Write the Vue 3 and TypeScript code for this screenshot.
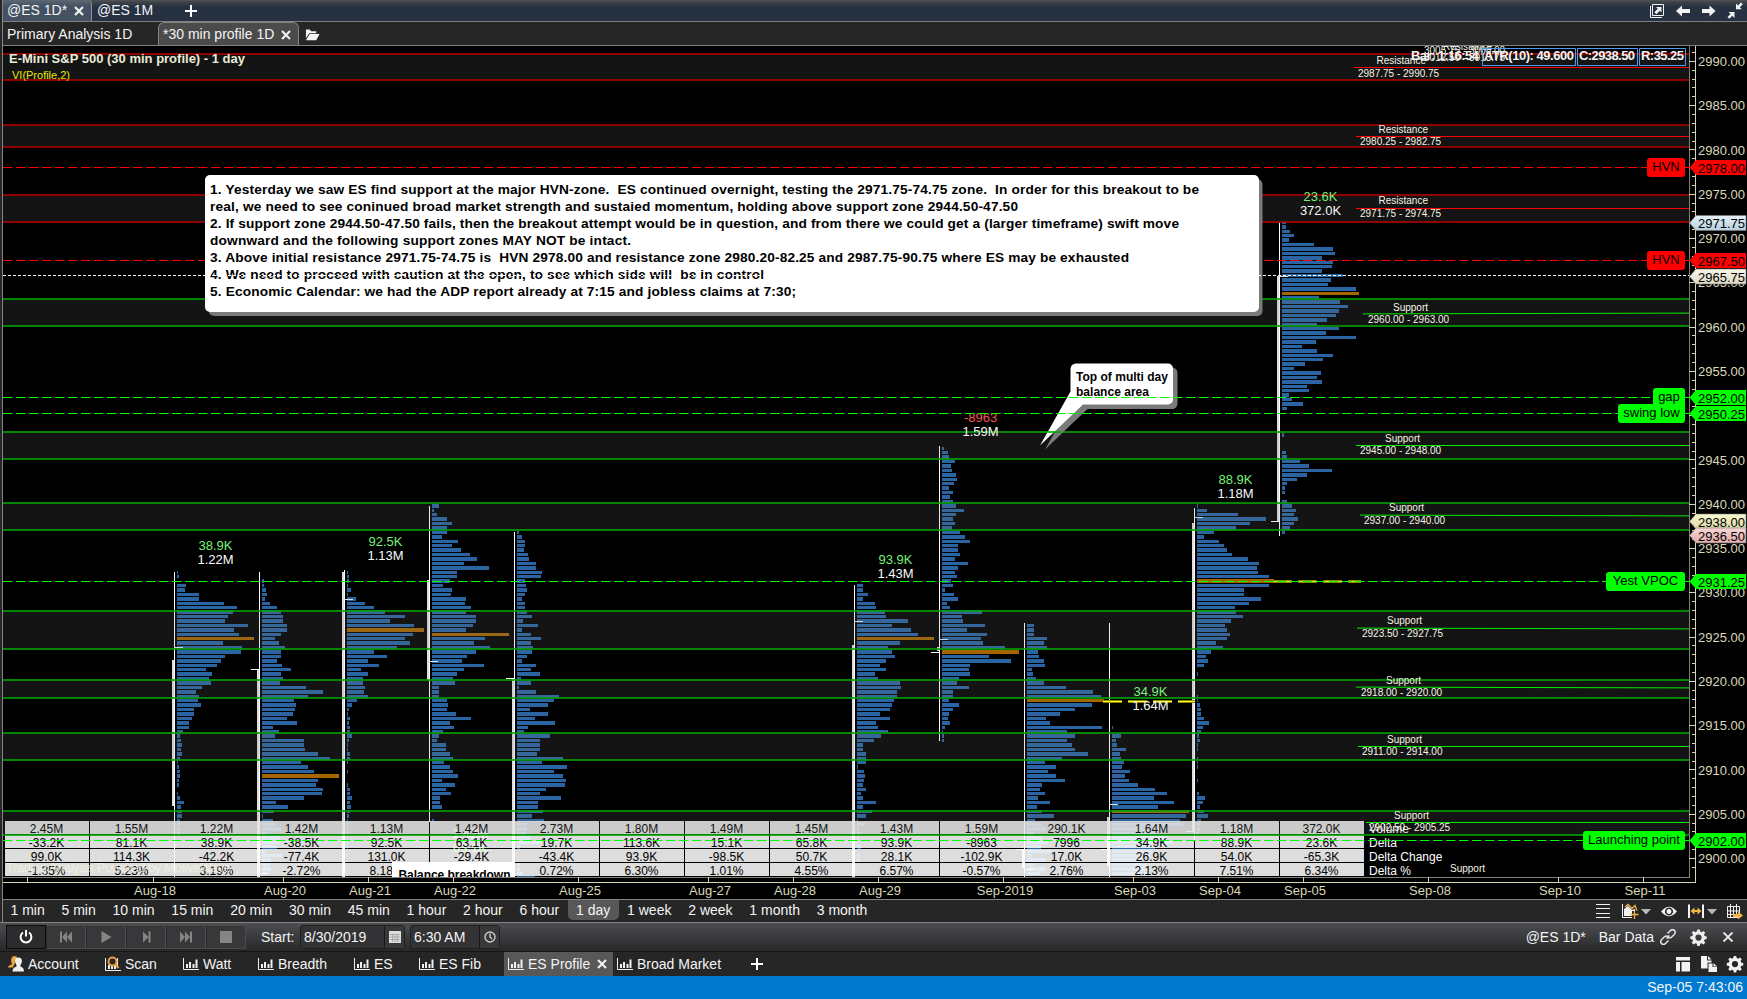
<script setup lang="ts">
interface Profile { x: number; start: number; poc: number; rows: number[] }
interface Bar { x: number; y: number; w: number; h: number; poc: boolean }

const ROW = 4.4286
const ORIGIN = 220.76
const rowTop = (i: number): number => Math.round(ORIGIN + ROW * i)

const profiles: Profile[] = [
  { x: 177, start: 79, poc: 15, rows: [1,2,0,9,8,22,22,47,60,56,51,48,71,57,62,77,46,65,64,48,44,40,29,35,32,34,25,19,22,21,24,17,17,15,12,12,6,3,4,5,4,5,3,1,2,3,3,2,2,0,1,3,7,4,5,5,3,3,3,3] },
  { x: 262, start: 81, poc: 44, rows: [2,2,4,5,3,8,15,19,21,21,25,25,19,13,17,23,19,19,15,20,29,19,21,18,44,61,46,32,34,33,31,25,35,11,17,13,42,42,43,56,68,39,46,52,77,56,54,61,60,42,14,26,12,1,11,13,19,5,18,18,15,3,20,9,8,9,5] },
  { x: 347, start: 79, poc: 13, rows: [1,2,2,1,4,1,9,18,27,38,58,43,67,77,66,58,63,50,27,40,21,32,14,21,16,16,18,17,21,10,5,2,1,3,2,3,3,5,2,1,1,3,3,1,0,1,0,0,1,3,3,5,3,4,3,2,1,2,1,1,0,1,1,0,1] },
  { x: 432, start: 64, poc: 29, rows: [7,2,5,15,20,15,15,10,26,20,29,38,45,32,57,25,25,18,11,20,19,34,33,39,34,44,44,41,34,77,53,42,58,44,35,30,52,32,25,21,23,7,7,7,15,16,15,24,39,18,22,11,7,5,14,14,18,21,12,18,21,26,10,23,14,19,8,8,10,0,0,2] },
  { x: 517, start: 70, poc: -1, rows: [2,5,8,8,7,11,12,19,19,25,24,8,9,10,8,5,8,8,10,15,6,21,5,14,24,14,16,15,10,5,19,14,23,4,14,2,19,42,37,31,13,31,18,38,11,7,33,23,23,23,20,46,25,50,37,46,49,48,29,23,44,21,21,26,15,27,10,10,9,13,24,3,0,0,0,3,3,6,18] },
  { x: 857, start: 82, poc: 12, rows: [6,6,11,6,18,19,28,29,51,35,54,61,77,43,31,35,38,29,23,29,18,21,43,44,40,40,37,35,33,23,33,19,21,31,24,17,6,6,9,9,9,1,7,8,7,6,9,4,6,19,6,15,9,1,8,2,4,2,1,4,0,3,3] },
  { x: 942, start: 51, poc: 46, rows: [2,6,7,13,9,10,14,15,12,7,11,8,11,14,22,14,11,13,10,18,23,28,16,16,18,13,26,16,13,15,9,11,3,12,16,5,8,40,20,21,43,25,45,39,41,63,77,47,69,28,27,28,17,15,27,11,11,7,17,11,7,6,8,3,1,2,2] },
  { x: 1027, start: 91, poc: 17, rows: [7,7,7,20,17,20,11,12,17,18,5,6,9,17,39,66,74,77,65,48,33,19,23,75,40,48,40,45,48,61,35,18,29,21,29,38,15,13,18,11,23,10,15,27,8,15,19,7,15,21,14,24,5,19,7,19,13] },
  { x: 1112, start: 114, poc: 19, rows: [1,0,9,4,5,14,8,9,12,10,18,13,17,26,43,55,42,62,46,77,74,68,71,50,45,55,60,43,40,39,30,35,36,38] },
  { x: 1197, start: 64, poc: 17, rows: [1,10,41,69,53,39,17,7,22,27,30,35,51,62,60,61,72,77,72,47,47,64,52,38,39,46,34,28,30,33,30,19,26,14,9,11,7,0,1,0,0,0,0,1,1,3,4,4,7,12,6,4,2,3,1,1,0,1,1,1,0,0,1,0,0,2,8,6,3,7,11,4,3,3,2] },
  { x: 1282, start: 0, poc: 16, rows: [4,4,8,12,7,32,51,53,40,51,50,40,61,49,46,74,77,37,58,66,57,54,45,35,57,44,74,34,20,35,51,41,23,12,39,35,40,25,27,7,10,21,5,0,0,0,0,0,2,0,0,0,4,5,18,27,50,25,15,5,3,3,0,5,10,14,12,16,12,8,3] },
]

const bars: Bar[] = profiles.flatMap((p) =>
  p.rows
    .map((w, k) => {
      const i = p.start + k
      const y = rowTop(i)
      return { x: p.x, y, w, h: rowTop(i + 1) - y - 1, poc: k === p.poc }
    })
    .filter((b) => b.w > 0),
)

// x is the wick position; body sits directly left of it
const candles = [
  { x: 174, top: 572, bottom: 877, body: [660, 806], left: 0, right: 647 },
  { x: 259, top: 572, bottom: 877, body: [669, 877], left: 669, right: 873 },
  { x: 344, top: 570, bottom: 877, body: [572, 877], left: 0, right: 599 },
  { x: 429, top: 506, bottom: 822, body: [580, 680], left: 0, right: 661 },
  { x: 514, top: 532, bottom: 877, body: [678, 877], left: 678, right: 0 },
  { x: 854, top: 585, bottom: 877, body: [645, 877], left: 0, right: 621 },
  { x: 939, top: 446, bottom: 741, body: [647, 651], left: 652, right: 639 },
  { x: 1024, top: 623, bottom: 877, body: [850, 868], left: 849, right: 869 },
  { x: 1109, top: 623, bottom: 877, body: [817, 866], left: 849, right: 804 },
  { x: 1194, top: 508, bottom: 840, body: [523, 832], left: 831, right: 517 },
  { x: 1279, top: 223, bottom: 536, body: [276, 521], left: 521, right: 276 },
]

const volumes = [
  { x: 215.5, y: 550, delta: '38.9K', total: '1.22M' },
  { x: 385.5, y: 546, delta: '92.5K', total: '1.13M' },
  { x: 895.5, y: 564, delta: '93.9K', total: '1.43M' },
  { x: 980.5, y: 422, delta: '-8963', total: '1.59M' },
  { x: 1235.5, y: 484, delta: '88.9K', total: '1.18M' },
  { x: 1150.5, y: 696, delta: '34.9K', total: '1.64M' },
  { x: 1320.5, y: 201, delta: '23.6K', total: '372.0K' },
]

const tableRows: string[][] = [
  ['2.45M','1.55M','1.22M','1.42M','1.13M','1.42M','2.73M','1.80M','1.49M','1.45M','1.43M','1.59M','290.1K','1.64M','1.18M','372.0K'],
  ['-33.2K','81.1K','38.9K','-38.5K','92.5K','63.1K','19.7K','113.6K','15.1K','65.8K','93.9K','-8963','7996','34.9K','88.9K','23.6K'],
  ['99.0K','114.3K','-42.2K','-77.4K','131.0K','-29.4K','-43.4K','93.9K','-98.5K','50.7K','28.1K','-102.9K','17.0K','26.9K','54.0K','-65.3K'],
  ['-1.35%','5.23%','3.19%','-2.72%','8.18%','','0.72%','6.30%','1.01%','4.55%','6.57%','-0.57%','2.76%','2.13%','7.51%','6.34%'],
]
const tableLabels = ['Volume', 'Delta', 'Delta Change', 'Delta %']

const zones = [
  { kind: 'res', top: 54, bottom: 80, mid: 67.5, slope: 0, x: 1354, label: 'Resistance', lx: 1376.5, ly: 64, range: '2987.75 - 2990.75', rx: 1358, ry: 77 },
  { kind: 'res', top: 125, bottom: 147, mid: 136.5, slope: 0, x: 1356, label: 'Resistance', lx: 1378.5, ly: 133, range: '2980.25 - 2982.75', rx: 1360, ry: 145 },
  { kind: 'res', top: 195, bottom: 222, mid: 208.5, slope: 0, x: 1356, label: 'Resistance', lx: 1378.5, ly: 204, range: '2971.75 - 2974.75', rx: 1360, ry: 217 },
  { kind: 'sup', top: 299, bottom: 326, mid: 313.5, slope: -1, x: 1363, label: 'Support', lx: 1393, ly: 311, range: '2960.00 - 2963.00', rx: 1368, ry: 323 },
  { kind: 'sup', top: 432, bottom: 459, mid: 445.5, slope: 0, x: 1356, label: 'Support', lx: 1385, ly: 442, range: '2945.00 - 2948.00', rx: 1360, ry: 454 },
  { kind: 'sup', top: 503, bottom: 530, mid: 515.5, slope: 1, x: 1360, label: 'Support', lx: 1389, ly: 511, range: '2937.00 - 2940.00', rx: 1364, ry: 524 },
  { kind: 'sup', top: 611, bottom: 649, mid: 628.5, slope: 1, x: 1357, label: 'Support', lx: 1387, ly: 624, range: '2923.50 - 2927.75', rx: 1362, ry: 637 },
  { kind: 'sup', top: 680, bottom: 698, mid: 687.5, slope: 1, x: 1356, label: 'Support', lx: 1386, ly: 684, range: '2918.00 - 2920.00', rx: 1361, ry: 696 },
  { kind: 'sup', top: 733, bottom: 760, mid: 746.5, slope: 0, x: 1358, label: 'Support', lx: 1387, ly: 743, range: '2911.00 - 2914.00', rx: 1362, ry: 755 },
  { kind: 'sup', top: 811, bottom: 835, mid: 822.5, slope: 0, x: 1366, label: 'Support', lx: 1394, ly: 819, range: '2902.50 - 2905.25', rx: 1369, ry: 831 },
]

const levels = [
  { y: 167.5, kind: 'red', label: 'HVN', x: 1647, w: 38, price: '2978.00' },
  { y: 260.5, kind: 'red', label: 'HVN', x: 1647, w: 38, price: '2967.50' },
  { y: 397.5, kind: 'green', label: 'gap', x: 1653, w: 32, price: '2952.00' },
  { y: 413.5, kind: 'green', label: 'swing low', x: 1618, w: 67, price: '2950.25' },
  { y: 581.5, kind: 'green', label: 'Yest VPOC', x: 1606, w: 79, price: '2931.25' },
  { y: 840.5, kind: 'green', label: 'Launching point', x: 1583, w: 102, price: '2902.00' },
]
const flags = [
  { y: 223, fill: 'url(#flagBlue)', price: '2971.75' },
  { y: 276.5, fill: 'url(#flagCream)', price: '2965.75' },
  { y: 521.5, fill: 'url(#flagYellow)', price: '2938.00' },
  { y: 535.5, fill: 'url(#flagPink)', price: '2936.50' },
]
const flagPoints = (y: number): string =>
  `1689.5,${y} 1696,${y - 7.5} 1746,${y - 7.5} 1746,${y + 7.5} 1696,${y + 7.5}`

const priceY = (p: number): number => 61.3 + (2990 - p) * 8.857
const majorPrices = Array.from({ length: 19 }, (_, i) => 2990 - i * 5)
const minorPrices = Array.from({ length: 93 }, (_, i) => 2991 - i).filter((p) => p % 5 !== 0)

const dates: [number, string][] = [
  [28, ''], [154, 'Aug-18'], [284, 'Aug-20'], [369, 'Aug-21'], [454, 'Aug-22'], [579, 'Aug-25'], [709, 'Aug-27'], [794, 'Aug-28'],
  [879, 'Aug-29'], [1004, 'Sep-2019'], [1134, 'Sep-03'], [1219, 'Sep-04'], [1304, 'Sep-05'], [1429, 'Sep-08'], [1559, 'Sep-10'], [1644, 'Sep-11'],
]

const notes: [string, number][] = [
  ['1. Yesterday we saw ES find support at the major HVN-zone.  ES continued overnight, testing the 2971.75-74.75 zone.  In order for this breakout to be', 989],
  ['real, we need to see coninued broad market strength and sustaied momentum, holding above support zone 2944.50-47.50', 808],
  ['2. If support zone 2944.50-47.50 fails, then the breakout attempt would be in question, and from there we could get a (larger timeframe) swift move', 969],
  ['downward and the following support zones MAY NOT be intact.', 421],
  ['3. Above initial resistance 2971.75-74.75 is  HVN 2978.00 and resistance zone 2980.20-82.25 and 2987.75-90.75 where ES may be exhausted', 919],
  ['4. We need to proceed with caution at the open, to see which side will  be in control', 554],
  ['5. Economic Calendar: we had the ADP report already at 7:15 and jobless claims at 7:30;', 586],
]

const timeframes = ['1 min', '5 min', '10 min', '15 min', '20 min', '30 min', '45 min', '1 hour', '2 hour', '6 hour', '1 day', '1 week', '2 week', '1 month', '3 month']

const pages = [
  { name: 'Account', icon: 'account', w: 97 },
  { name: 'Scan', icon: 'scan', w: 78 },
  { name: 'Watt', icon: 'chart', w: 75 },
  { name: 'Breadth', icon: 'chart', w: 96 },
  { name: 'ES', icon: 'chart', w: 65 },
  { name: 'ES Fib', icon: 'chart', w: 89 },
  { name: 'ES Profile', icon: 'chart', w: 109 },
  { name: 'Broad Market', icon: 'chart', w: 136 },
]
const gear = 'M6.8 0h2.4l.5 2.1 1.4.6 1.9-1.2 1.7 1.7-1.2 1.9.6 1.4 2.1.5v2.4l-2.1.5-.6 1.4 1.2 1.9-1.7 1.7-1.9-1.2-1.4.6-.5 2.1H6.8l-.5-2.1-1.4-.6-1.9 1.2-1.7-1.7 1.2-1.9-.6-1.4L-.2 9.400V7l2.100-.5.6-1.400L1.300 3.200 3 1.500l1.900 1.200 1.400-.6zM8 5a3.100 3.100 0 1 0 0 6.200A3.100 3.100 0 1 0 8 5z'
</script>

<template>
  <div class="app">
    <div class="frame">
      <header class="topbar">
        <div class="top-tab active">@ES 1D*
          <svg class="close" viewBox="0 0 10 10"><path d="M1 1l8 8M9 1l-8 8" /></svg>
        </div>
        <div class="top-tab">@ES 1M</div>
        <svg class="plus" viewBox="0 0 12 12"><path d="M6 0v12M0 6h12" /></svg>
        <div class="spacer"></div>
        <svg class="top-icons" width="100" height="20" viewBox="1647 0 100 20">
          <path class="line" d="M1652.500 3.500h11v11h-11zM1650.500 5v11.500H1662" />
          <path class="solid" d="M1656 6h5.500v5.500l-1.700-1.700-3.500 3.500-2-2 3.500-3.500z" />
          <path class="solid" d="M1676 10l6-5.500v3.500h8v4h-8v3.500z" />
          <path class="solid" d="M1715.500 10l-6-5.500v3.500h-7.500v4h7.500v3.500z" />
          <path class="solid" d="M1736 2.500l2 2 3-3 1.800 1.800-3 3 2 2h-5.800zM1734.500 17v-6h-6l2 2-3 3 1.800 1.800 3-3z" />
        </svg>
      </header>
      <div class="subbar">
        <div class="sub-tab">Primary Analysis 1D</div>
        <div class="sub-tab active">*30 min profile 1D
          <svg class="close" viewBox="0 0 10 10"><path d="M1 1l8 8M9 1l-8 8" /></svg>
        </div>
        <svg class="folder" viewBox="0 0 16 12"><path d="M1 0h4l1.500 2H12v2H4.500L1 9.500zM5 5h10.500L12 11.500H1z" /></svg>
      </div>

      <svg class="chart" width="1744" height="853" viewBox="3 46 1744 853">
        <defs>
          <linearGradient id="flagBlue" x1="0" y1="0" x2="0" y2="1"><stop offset="0" stop-color="#e6f2fa" /><stop offset="1" stop-color="#b4cfdf" /></linearGradient>
          <linearGradient id="flagCream" x1="0" y1="0" x2="0" y2="1"><stop offset="0" stop-color="#faf7ea" /><stop offset="1" stop-color="#dcd8c6" /></linearGradient>
          <linearGradient id="flagYellow" x1="0" y1="0" x2="0" y2="1"><stop offset="0" stop-color="#fbfad0" /><stop offset="1" stop-color="#dad8a4" /></linearGradient>
          <linearGradient id="flagPink" x1="0" y1="0" x2="0" y2="1"><stop offset="0" stop-color="#fbd6d6" /><stop offset="1" stop-color="#dfaaaa" /></linearGradient>
          <clipPath id="plot"><rect x="3" y="46" width="1686" height="831" /></clipPath>
        </defs>

        <g clip-path="url(#plot)">
          <g shape-rendering="crispEdges">
            <rect v-for="(b, i) in bars" :key="i" :class="b.poc ? 'poc' : 'bar'" :x="b.x" :y="b.y" :width="b.w" :height="b.h" />
            <g v-for="c in candles" :key="c.x" class="candle">
              <rect :x="c.x" :y="c.top" width="1" :height="c.bottom - c.top" />
              <rect class="body" :x="c.x - 2" :y="c.body[0]" width="2" :height="c.body[1] - c.body[0]" />
              <rect v-if="c.left" :x="c.x - 8" :y="c.left" width="9" height="1" />
              <rect v-if="c.right" class="tick" :x="c.x" :y="c.right" width="9" height="1" />
            </g>
            <path class="vpoc-glow" d="M1103 701.500h92M1273 581.500h88" stroke-dasharray="18.500 6.500" />
            <path class="vpoc" d="M1103 701.500h92M1273 581.500h88" stroke-dasharray="18.500 6.500" />
          </g>

          <g class="volumes">
            <text x="470" y="838">1.42M</text>
            <text class="pos" x="470" y="852">63.1K</text>
          </g>

          <g v-for="(row, r) in tableRows" :key="r">
            <g v-for="(cell, c) in row" :key="c">
              <rect class="cell" :x="5 + c * 85" :y="821 + r * 14" width="84" height="13" shape-rendering="crispEdges" />
              <text class="cell-text" :x="46.500 + c * 85" :y="833 + r * 14">{{ cell }}</text>
            </g>
            <text class="row-label" x="1369" :y="833 + r * 14">{{ tableLabels[r] }}</text>
          </g>
          <text class="watermark" x="6" y="872" textLength="225">Trading Analysis Powered by MotiveWave</text>
          <rect class="note" x="392" y="862" width="123" height="40" />
          <text class="note-text" x="398.500" y="879" textLength="112">Balance breakdown</text>

          <g v-for="z in zones" :key="z.range">
            <rect class="zone" x="3" :y="z.top" width="1686" :height="z.bottom - z.top" shape-rendering="crispEdges" />
            <path :class="['edge', z.kind]" :d="`M3 ${z.top}H1689M3 ${z.bottom}H1689`" />
            <path :class="['mid', z.kind]" :d="`M${z.x} ${z.mid - z.slope * 0.4}L1689 ${z.mid + z.slope * 0.4}`" />
            <text class="zone-text" :x="z.lx" :y="z.ly">{{ z.label }}</text>
            <text class="zone-text" :x="z.rx" :y="z.ry">{{ z.range }}</text>
          </g>
          <text class="zone-text" x="1450" y="872">Support</text>
          <text class="zone-text" x="1443" y="50">Resistance</text>
          <text class="zone-text" x="1424" y="54">3005.75 - 3008.00</text>
          <text class="zone-text" x="1424" y="61">3012.50 - 3013.75</text>

          <text class="title" x="9" y="63" textLength="236">E-Mini S&amp;P 500 (30 min profile) - 1 day</text>
          <text class="study" x="12" y="79" textLength="58">VI(Profile,2)</text>
          <g class="volumes">
            <g v-for="v in volumes" :key="v.x">
              <text :class="v.delta.startsWith('-') ? 'neg' : 'pos'" :x="v.x" :y="v.y">{{ v.delta }}</text>
              <text :x="v.x" :y="v.y + 14">{{ v.total }}</text>
            </g>
          </g>

          <path class="level red" d="M3 167.500H1647M3 260.500H1647" />
          <path class="note-shadow" d="M214 179h1043a5.500 5.500 0 0 1 5.500 5.500V311a5 5 0 0 1-5 5H214q-3 0-5-3z" />
          <rect class="note" x="205" y="175" width="1054" height="137" rx="5" />
          <text v-for="(n, i) in notes" :key="i" class="note-text big" x="210" :y="194 + i * 17" :textLength="n[1]">{{ n[0] }}</text>

          <path class="note-shadow" d="M1080 367.500h92a5.500 5.500 0 0 1 5.500 5.500v30.500a5.500 5.500 0 0 1-5.500 5.500h-84.500L1045 449.500 1075 396V372z" />
          <path class="note" d="M1076 363.500h92a5 5 0 0 1 5 5v31a5 5 0 0 1-5 5h-85L1040 445.500 1070.500 391.500V369a5.500 5.500 0 0 1 5.500-5.500z" />
          <text class="note-text" x="1076" y="381" textLength="92">Top of multi day</text>
          <text class="note-text" x="1076" y="396" textLength="73">balance area</text>

          <path class="last" d="M3 275.500H1689" />
          <path class="level green" d="M3 397.500H1650M3 413.500H1618M3 581.500H1606M3 840.500H1583" />
          <path class="edge sup" d="M1040 432h20" />
        </g>

        <g class="info">
          <path d="M1482.500 48.500h93v17h-93zM1577.500 48.500h60v17h-60zM1639.500 48.500h46v17h-46z" />
          <text x="1411" y="60" textLength="68">Bar: 1:16:54</text>
          <text x="1484" y="60" textLength="90">ATR(10): 49.600</text>
          <text x="1579" y="60" textLength="56">C:2938.50</text>
          <text x="1641" y="60" textLength="43">R:35.25</text>
        </g>

        <g shape-rendering="crispEdges">
          <path class="border" d="M1689.500 46V877.500H3" />
          <path class="axis" d="M1695.500 46V882.500H3" />
          <path v-for="p in majorPrices" :key="p" class="axis" :d="`M1689 ${priceY(p)}h6`" />
          <path v-for="p in minorPrices" :key="p" class="axis" :d="`M1692 ${priceY(p)}h3`" />
          <path v-for="d in dates" :key="d[0]" class="axis" :d="`M${d[0] - 0.5} 877v5`" />
        </g>
        <text v-for="p in majorPrices" :key="p" class="axis-text" x="1698" :y="priceY(p) + 4.700" textLength="47">{{ p.toFixed(2) }}</text>
        <text v-for="d in dates" :key="d[0]" class="axis-text date" :x="d[0] + 1" y="895">{{ d[1] }}</text>

        <g v-for="f in flags" :key="f.price">
          <polygon class="flag-edge" :points="flagPoints(f.y)" :fill="f.fill" />
          <text class="tag-text" x="1698" :y="f.y + 5" textLength="47">{{ f.price }}</text>
        </g>
        <g v-for="l in levels" :key="l.price" :class="['tag', l.kind]">
          <path :d="`M1685 ${l.y}h6`" />
          <rect :x="l.x" :y="l.y - 9.500" :width="l.w" height="19" rx="3" />
          <text class="tag-text mid-text" :x="l.x + l.w / 2" :y="l.y + 3.500">{{ l.label }}</text>
          <polygon :points="flagPoints(l.y)" />
          <text class="tag-text" x="1698" :y="l.y + 5" textLength="47">{{ l.price }}</text>
        </g>
      </svg>

      <div class="timebar">
        <div v-for="t in timeframes" :key="t" :class="['tf', { active: t === '1 day' }]">{{ t }}</div>
        <div class="spacer"></div>
        <svg width="160" height="22" viewBox="1587 900 160 22">
          <path class="line" d="M1596 904.500h14M1596 908.500h14M1596 913.500h14M1596 917.500h14" />
          <path class="line" d="M1622.500 904v13.500H1632" />
          <path class="solid" d="M1624 916v-7l4-3 4 4 3-1v2h-3v5z" />
          <path class="gold" d="M1625 907l3-2.500 4 4 3-3 2 5M1634.500 911v8M1630.500 914.500h8" />
          <path class="dim" d="M1641 909h10l-5 5.500zM1707 909h10l-5 5.500z" />
          <path class="solid" fill-rule="evenodd" d="M1661 911.500q8-9.500 16 0q-8 9.500-16 0zM1669 907.500a4 4 0 1 0 .01 0zM1669 909a2.500 2.500 0 1 1-.01 0z" />
          <path class="line thick" d="M1689 904.500v13.500M1703 904.500v13.500" />
          <path class="gold-fill" d="M1690.500 911l4-3.500v2.500h3v-2.500l4 3.500-4 3.500v-2.500h-3v2.500z" />
          <path class="line" d="M1727.500 906.500h12v11h-12zM1727.500 911h12M1727.500 914.500h12M1730.500 904v13M1733.500 907v10M1736.500 904v13" />
          <path class="gold-fill" d="M1733 914h5v-2.500l5 4-5 4V917h-5z" />
        </svg>
      </div>
    </div>

    <div class="replay">
      <div class="transport">
        <div class="tbtn on"><svg viewBox="0 0 14 14"><path class="pw" d="M7 0v6.500M4 2.500a5.400 5.400 0 1 0 6 0" /></svg></div>
        <div class="tbtn"><svg viewBox="0 0 14 14"><path d="M1 1.500h2v11H1zM8 1.500v11L3 7zM13 1.500v11L8 7z" /></svg></div>
        <div class="tbtn"><svg viewBox="0 0 14 14"><path d="M2.500 1l10 6-10 6z" /></svg></div>
        <div class="tbtn"><svg viewBox="0 0 14 14"><path d="M4 1.500L9.500 7 4 12.500zM9.500 1.500h2v11h-2z" /></svg></div>
        <div class="tbtn"><svg viewBox="0 0 14 14"><path d="M1 1.500L6 7l-5 5.500zM6 1.500L11 7l-5 5.500zM11 1.500h2v11h-2z" /></svg></div>
        <div class="tbtn"><svg viewBox="0 0 14 14"><path d="M1 1h12v12H1z" /></svg></div>
      </div>
      <span class="start">Start:</span>
      <div class="field date-field"><span>8/30/2019</span>
        <i><svg viewBox="0 0 12 12"><path class="cal" d="M0 0h12v12H0z" /><path class="grid" d="M1 3.500h10M1 6h10M1 8.500h10M3.500 3v8M6 3v8M8.500 3v8" /></svg></i>
      </div>
      <div class="field time-field"><span>6:30 AM</span>
        <i><svg viewBox="0 0 12 12"><circle class="clock" cx="6" cy="6" r="5" /><path class="clock" d="M6 2.500V6l2 2" /></svg></i>
      </div>
      <div class="spacer"></div>
      <span class="symbol">@ES 1D*</span>
      <span class="bardata">Bar Data</span>
      <svg class="link" viewBox="0 0 16 16"><path d="M6.500 9.500l3-3M7.500 4.500l3-3a2.600 2.600 0 0 1 4 3.700l-3 3a2.600 2.600 0 0 1-3.700 0M8.500 11.500l-3 3a2.600 2.600 0 0 1-4-3.700l3-3a2.600 2.600 0 0 1 3.700 0" /></svg>
      <svg class="gear" viewBox="-0.5 -0.5 17 17"><path fill-rule="evenodd" :d="gear" /></svg>
      <svg class="close big" viewBox="0 0 10 10"><path d="M.5.5l9 9M9.500.5l-9 9" /></svg>
    </div>

    <div class="pages">
      <div v-for="p in pages" :key="p.name" :class="['page', { active: p.name === 'ES Profile' }]" :style="{ width: p.w + 'px' }">
        <svg v-if="p.icon === 'chart'" class="picon" viewBox="0 0 16 16"><path class="axes" d="M.5 2v11.500H16" /><path d="M3 8h2v4H3zM6 6h2v6H6zM9.500 8h2v4h-2zM12.500 3.500h2V12h-2z" /></svg>
        <svg v-else-if="p.icon === 'scan'" class="picon" viewBox="0 0 16 16"><path class="axes" d="M.5 2v12.500H16M12.500 2v10" /><path d="M3 9h2v4H3zM6 10h2v3H6zM9 10h2v3H9z" /><circle class="lens" cx="7.500" cy="5.500" r="4" /><path class="lens" d="M10.500 8.500l3 3.500" /></svg>
        <svg v-else class="picon" viewBox="0 0 16 16"><path class="gold-fill" d="M6.500 0a3.500 3.500 0 0 1 3 2Q6 3 7 7.500L6 8.500q0 2-1.500 3H0Q0 9.500 4 8.500 2.500 5 3.500 2 4.500 0 6.500 0z" /><path d="M10.500 1.500c4 0 4.500 4 2 7.500v1.500q3.500 1 3.500 5H4.500q0-4 4-5V9c-2.500-4-2-7.500 2-7.500z" /></svg>
        <span>{{ p.name }}</span>
        <svg v-if="p.name === 'ES Profile'" class="close" viewBox="0 0 10 10"><path d="M1 1l8 8M9 1l-8 8" /></svg>
      </div>
      <svg class="plus" viewBox="0 0 12 12"><path d="M6 0v12M0 6h12" /></svg>
      <div class="spacer"></div>
      <svg width="80" height="24" viewBox="1667 952 80 24">
        <path class="solid" d="M1676 957h14v3.500h-14zM1676 962h4v9.500h-4zM1681.500 962h8.500v9.500h-8.500z" />
        <path class="solid" d="M1701 956h6v4.500h4.500v2h-4v6H1701zM1708 956l3.500 3.500h-3.500zM1708.500 963.500h4V967h4.500v5h-8.500zM1713.500 963l3.500 3.500h-3.500z" />
        <path class="solid" transform="translate(1727 956)" fill-rule="evenodd" :d="gear" />
      </svg>
    </div>
    <footer class="status">Sep-05 7:43:06</footer>
  </div>
</template>

<style>
body { margin: 0; background: #262626; overflow: hidden; }
</style>

<style scoped>
.app { width: 1747px; height: 999px; display: flex; flex-direction: column; background: #262626; color: #f4f4f4; font: 14px "Liberation Sans", Arial, sans-serif; overflow: hidden; }
.frame { box-sizing: border-box; height: 923px; padding-left: 2px; border-bottom: 1px solid #858585; background: #262626; display: flex; flex-direction: column; }
.frame > * { border-left: 1px solid #858585; box-sizing: border-box; flex: none; }
.spacer { flex: 1; }
.topbar { height: 22px; display: flex; align-items: center; background: linear-gradient(#555 0, #3e444a 2px, #263142 7px); border-bottom: 1px solid #808080; }
.top-tab { box-sizing: border-box; height: 21px; line-height: 20px; padding-left: 4px; white-space: nowrap; }
.top-tab.active { width: 89px; background: linear-gradient(#5d6874, #435163 6px); border-right: 1px solid #8b929b; border-top-right-radius: 4px; margin-right: 1px; }
.top-tab:not(.active) { width: 92px; }
.close { width: 10px; height: 10px; fill: none; stroke: #f0f0f0; stroke-width: 2.2; margin-left: 7px; vertical-align: -1px; }
.top-tab .close { margin-left: 3px; }
.plus { width: 12px; height: 12px; stroke: #fff; stroke-width: 2; }
.line { fill: none; stroke: #f2f2f2; stroke-width: 1; }
.line.thick { stroke-width: 2; }
.solid { fill: #f2f2f2; }
.gold { fill: none; stroke: #f5b040; stroke-width: 1.3; }
.gold-fill { fill: #f5b549; }
.dim { fill: #b8b8b8; }
.subbar { height: 24px; display: flex; background: #262626; border-bottom: 1px solid #808080; }
.sub-tab { box-sizing: border-box; height: 23px; line-height: 24px; padding-left: 4px; width: 155px; white-space: nowrap; }
.sub-tab.active { width: 141px; background: #4b4b4b; border: 1px solid #858585; border-bottom: 0; border-radius: 6px 6px 0 0; line-height: 22px; }
.sub-tab .close { margin-left: 3px; }
.folder { width: 15px; height: 12px; margin: 7px 0 0 6px; fill: #f2f2f2; }
.chart { background: #000; display: block; box-sizing: content-box; }
.chart text { font-family: "Liberation Sans", Arial, sans-serif; }
.bar { fill: #2a64a2; }
.poc { fill: #a46600; }
.candle rect { fill: #fff; }
.candle .body { fill: #dedede; }
.candle .tick { fill: #d6e6f8; }
.vpoc { fill: none; stroke: #ffff20; stroke-width: 1; }
.vpoc-glow { fill: none; stroke: #8c8c00; stroke-width: 3; }
.volumes text { font-size: 13px; text-anchor: middle; fill: #f8f8f8; }
.volumes .pos { fill: #78f078; }
.volumes .neg { fill: #f65454; }
.title { font-size: 13px; font-weight: bold; fill: #e8ecd8; }
.study { font-size: 11px; fill: #e8e800; }
.cell { fill: #fff; fill-opacity: 0.865; }
.cell-text { font-size: 12px; text-anchor: middle; fill: #000; }
.row-label { font-size: 12px; fill: #fff; }
.watermark { font-size: 13px; fill: #f4f4e0; fill-opacity: 0.75; }
.note { fill: #fff; }
.note-shadow { fill: #7a7a7a; }
.note-text { font-size: 12px; font-weight: bold; fill: #000; white-space: pre; }
.note-text.big { font-size: 13.7px; }
.zone { fill: #787878; fill-opacity: 0.17; }
.edge { fill: none; stroke-width: 2; }
.edge.res { stroke: #b00000; stroke-opacity: 0.8; }
.edge.sup { stroke: #00a500; stroke-opacity: 0.8; }
.mid { fill: none; stroke-width: 1; }
.mid.res { stroke: #f00; }
.mid.sup { stroke: #00f000; }
.zone-text { font-size: 10px; fill: #f4f4e6; }
.level { fill: none; stroke-width: 1; stroke-dasharray: 9.5 3.5; }
.level.red { stroke: #f00; }
.level.green { stroke: #0f0; }
.last { stroke: #fff; stroke-width: 1; stroke-dasharray: 3 2; }
.info path { fill: none; stroke: #4a9cf5; }
.info text { font-size: 13px; font-weight: bold; fill: #f4f4f4; }
.border { fill: none; stroke: #808078; }
.axis { fill: none; stroke: #d6d6b6; }
.axis-text { font-size: 13px; fill: #d8d8ba; }
.axis-text.date { text-anchor: middle; }
.tag-text { font-size: 13px; fill: #000; }
.mid-text { text-anchor: middle; }
.flag-edge { stroke: #777; stroke-width: 0.6; }
.tag.red rect, .tag.red polygon { fill: #f00; }
.tag.green rect, .tag.green polygon { fill: #0f0; }
.tag.red path { stroke: #f00; }
.tag.green path { stroke: #0f0; }
.timebar { height: 23px; display: flex; border-top: 1px solid #858585; background: #262626; }
.tf { height: 20px; line-height: 21px; padding: 0 8.4px; white-space: nowrap; border-radius: 0 0 5px 5px; }
.tf:first-child { padding-left: 7.5px; }
.tf.active { background: #585858; }
.replay { height: 28px; display: flex; align-items: center; background: linear-gradient(#4c4d50, #28282a); border-bottom: 1px solid #161616; }
.transport { display: flex; margin-left: 6px; }
.tbtn { box-sizing: border-box; width: 40px; height: 24px; border: 1px solid #4c4c4e; border-left-color: #2a2a2a; background: #38383a; display: flex; align-items: center; justify-content: center; }
.tbtn.on { border-color: #0c0c0c; background: #2c2c2e; }
.tbtn svg { width: 14px; height: 14px; fill: #858585; }
.tbtn .pw { fill: none; stroke: #fff; stroke-width: 2; }
.start { margin-left: 15px; width: 39px; }
.field { box-sizing: border-box; height: 24px; border: 1px solid #202020; background: #333335; border-radius: 3px; display: flex; align-items: center; justify-content: space-between; padding-left: 3px; white-space: nowrap; }
.date-field { width: 105px; }
.time-field { width: 90px; margin-left: 5px; }
.field i { box-sizing: border-box; width: 20px; height: 22px; border-left: 1px solid #181818; background: #38383a; display: flex; align-items: center; justify-content: center; }
.field svg { width: 12px; height: 12px; }
.cal { fill: #dcdcdc; }
.grid { stroke: #999; stroke-width: 0.7; }
.clock { fill: none; stroke: #ccc; stroke-width: 1.4; }
.symbol { margin-right: 13px; }
.bardata { margin-right: 6px; }
.link { width: 16px; height: 16px; fill: none; stroke: #e4e4e4; stroke-width: 1.5; margin-right: 14px; }
.gear { width: 17px; height: 17px; fill: #eee; margin-right: 8px; }
.close.big { margin: 0 14px 0 8px; stroke-width: 1.8; }
.pages { height: 24px; display: flex; align-items: center; padding-left: 4px; background: #262626; }
.page { box-sizing: border-box; height: 24px; display: flex; align-items: center; padding-left: 4px; white-space: nowrap; }
.page.active { background: #585858; }
.picon { width: 16px; height: 16px; fill: #f0f0f0; margin-right: 4px; flex: none; }
.picon .axes { fill: none; stroke: #f0f0f0; }
.picon .gold-fill { fill: #f0a63c; }
.lens { fill: none; stroke: #e8a040; stroke-width: 2; }
.pages .plus { margin-left: 2px; }
.status { height: 23px; line-height: 22px; background: #007ad0; text-align: right; padding-right: 4px; }
</style>
